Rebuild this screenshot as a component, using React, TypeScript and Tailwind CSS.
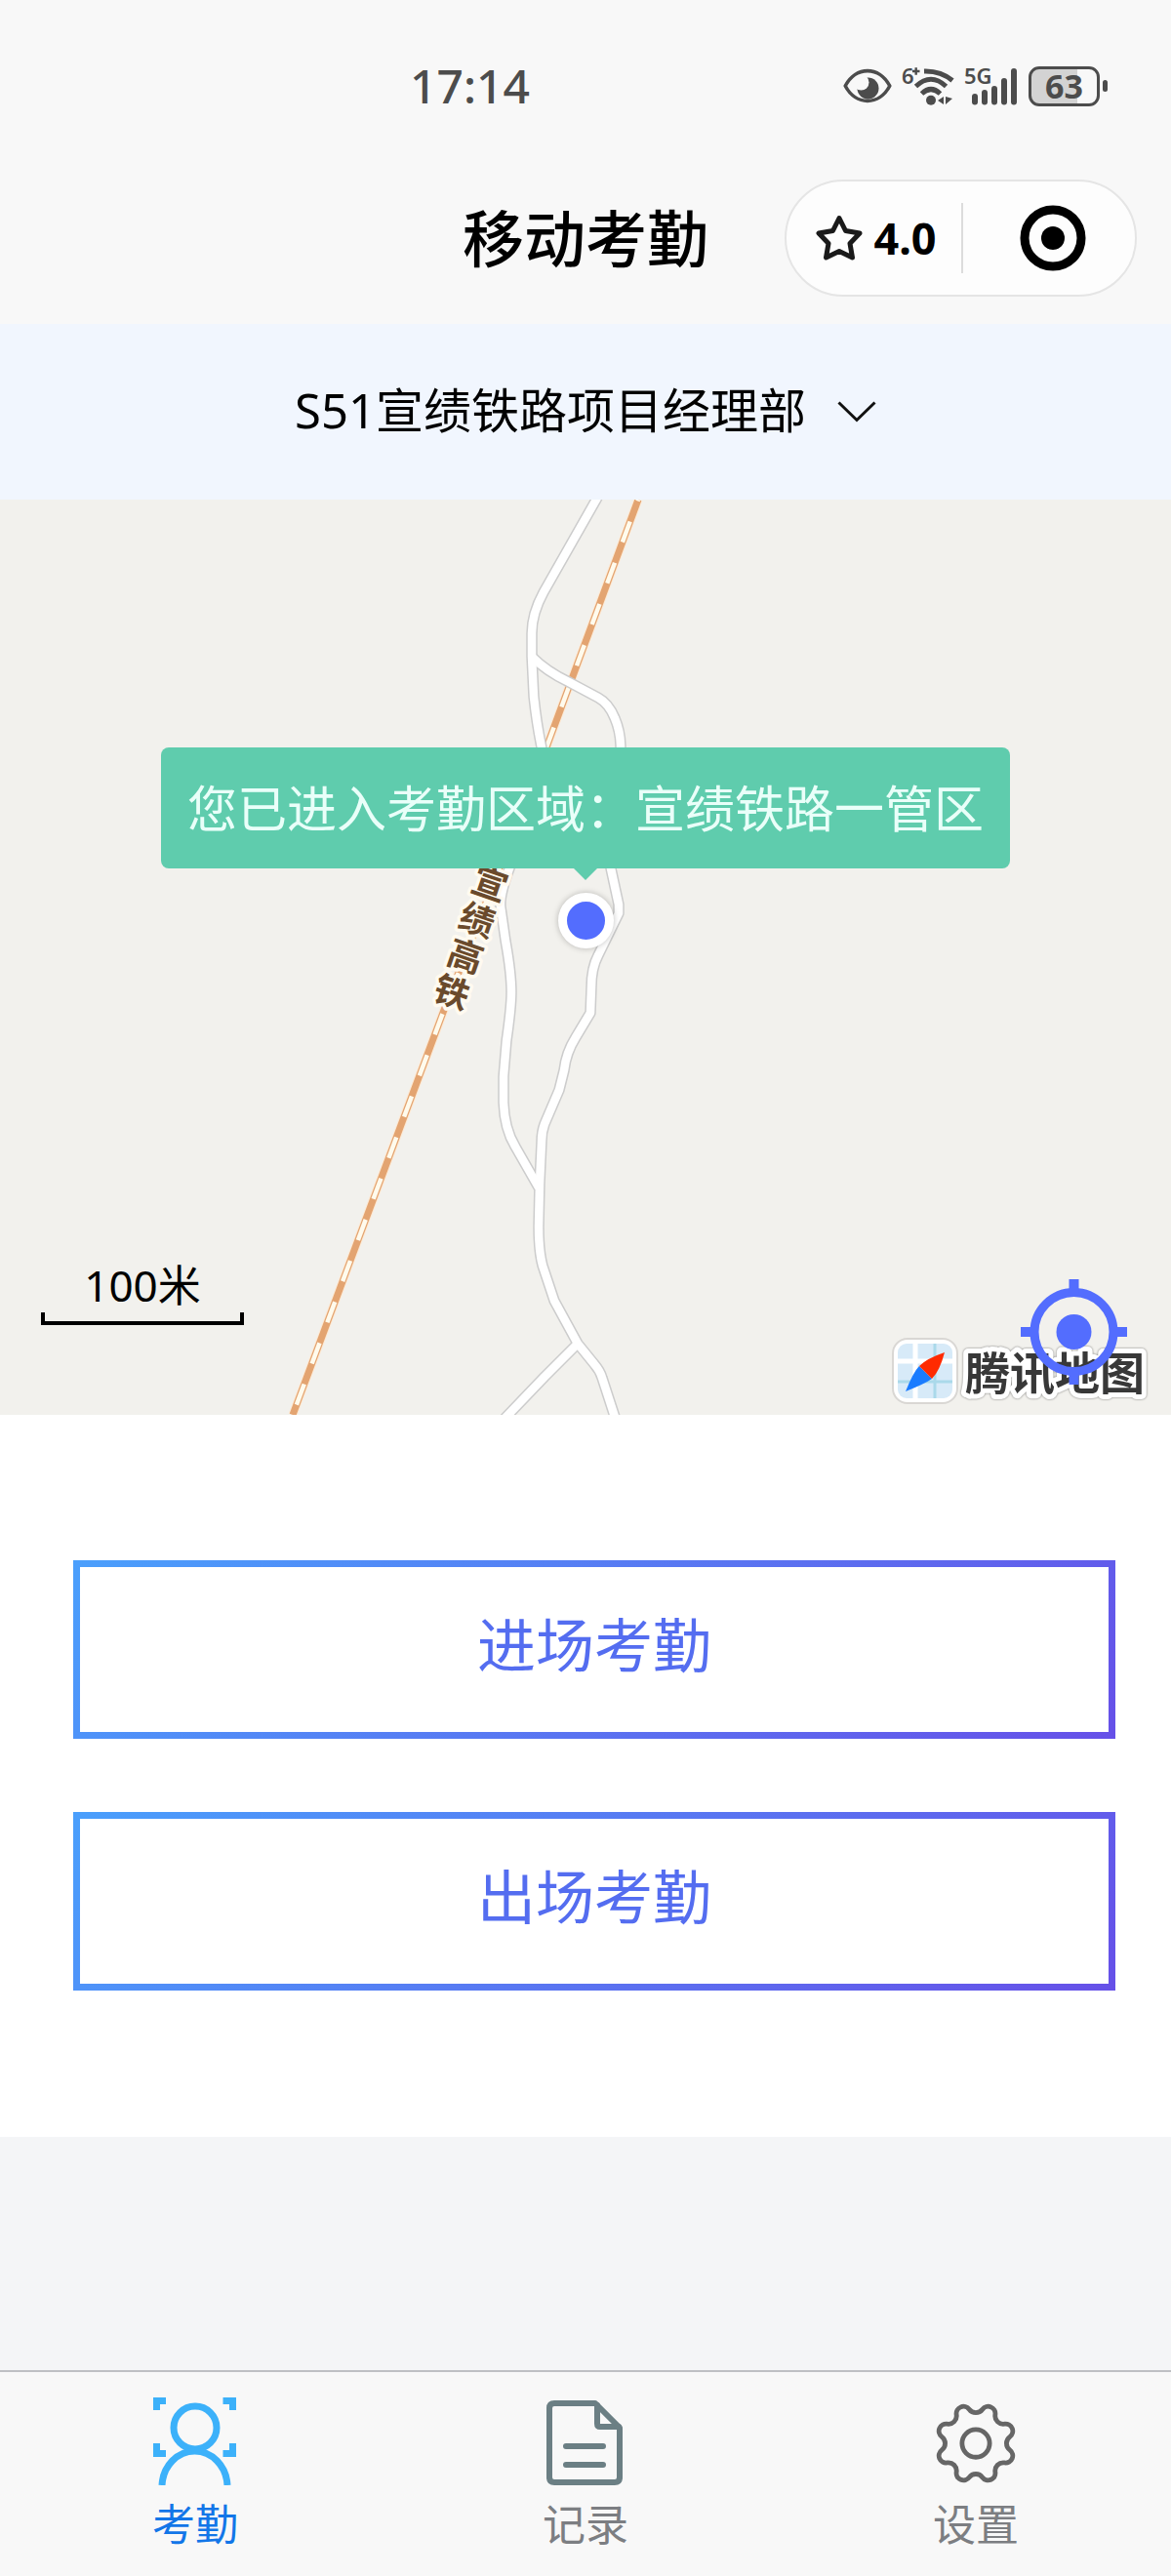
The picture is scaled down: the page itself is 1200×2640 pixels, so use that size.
import { useState } from "react";

const PROJECTS = ["S51宣绩铁路项目经理部"];

const TABS = [
  { id: "attendance", label: "考勤", icon: FaceIcon },
  { id: "records", label: "记录", icon: RecordIcon },
  { id: "settings", label: "设置", icon: GearIcon },
];

const MINOR_ROADS = [
  "M615 -8 L611 0 L557 95 Q545 117 545 137 L545 161 L547 202 Q550 230 555 254 L551 300 L522 378 Q512 405 513 417 L518 452 Q524 485 524 505 Q524 520 519 555 L516 591 V618 Q517 645 528 663 L552 705",
  "M545 161 Q560 176 583 187 L613 203 Q624 209 630 224 Q636 238 636 254 L626 360 V378 L634 415 V424 L613 467 Q606 480 606 500 L605 526 L590 551 Q580 567 578 585 L573 605 L558 640 Q555 648 555 658 L553 701 L552 745 Q552 770 556 785 L568 821 L592 865 L609 886 Q615 893 617 900 L632 946",
  "M592 865 L558 899 L514 945",
];

const RAILWAY = "M654 0 L560 254 L455 523 L300 938";

const RAIL_LABEL = [
  { char: "宣", x: 502, y: 394 },
  { char: "绩", x: 489, y: 431 },
  { char: "高", x: 477, y: 468 },
  { char: "铁", x: 463, y: 505 },
];

export default function App() {
  const [tab, setTab] = useState("attendance");

  return (
    <div className="flex min-h-screen flex-col bg-[#f4f5f7] font-['Noto_Sans','Noto_Sans_CJK_SC',sans-serif] text-black">
      <header className="bg-[#f8f8f8]">
        <StatusBar />
        <NavBar />
      </header>

      <label className="flex h-[180px] items-center justify-center gap-8 bg-[#f1f6fe]">
        <select
          aria-label="项目"
          className="mb-1 appearance-none bg-transparent text-[49px] leading-[72px] outline-none"
        >
          {PROJECTS.map((name) => (
            <option key={name}>{name}</option>
          ))}
        </select>
        <svg viewBox="0 0 40 22" className="h-[22px] w-10" fill="none" stroke="#111" strokeWidth="3">
          <path d="M1.5 1.5 L20 19.5 L38.5 1.5" />
        </svg>
      </label>

      <MapView />

      <main className="flex flex-col gap-[75px] bg-white pt-[149px] pr-[57px] pb-[150px] pl-[75px]">
        <PunchButton label="进场考勤" />
        <PunchButton label="出场考勤" />
      </main>

      <nav className="mt-auto grid grid-cols-3 border-t-2 border-[#bfc0c4] bg-[#f8f8f8]">
        {TABS.map(({ id, label, icon: Icon }) => (
          <button
            key={id}
            onClick={() => setTab(id)}
            className={`flex flex-col items-center gap-2 pt-[26px] pb-[21px] text-[44px] leading-[64px] ${
              tab === id ? "text-[#1276e8]" : "text-[#7c7e82]"
            }`}
          >
            <Icon />
            {label}
          </button>
        ))}
      </nav>
    </div>
  );
}

function StatusBar() {
  return (
    <div className="flex h-[176px] items-center pr-[65px] pl-[35%] text-[#4c4c4c]">
      <span className="text-[48px] leading-[60px] font-medium">17:14</span>
      <div className="ml-auto flex items-center gap-[10px]">
        <svg viewBox="0 0 50 36" className="h-9 w-[50px]">
          <circle cx="25.5" cy="20.5" r="11" fill="currentColor" />
          <circle cx="18.5" cy="14.5" r="8" fill="#f8f8f8" />
          <path
            d="M2.2 18 C13 -2.5 37 -2.5 47.8 18 C37 38.5 13 38.5 2.2 18 Z"
            fill="none"
            stroke="currentColor"
            strokeWidth="3.6"
            strokeLinejoin="round"
          />
        </svg>

        <svg viewBox="0 0 54 40" className="h-10 w-[54px] overflow-visible">
          <text x="0" y="18" fontSize="22" fontWeight="600" fill="currentColor">
            6
          </text>
          <path d="M11 5 H18.5 M14.7 1.2 V8.8" stroke="currentColor" strokeWidth="2.4" />
          <g fill="none" stroke="currentColor" strokeWidth="5">
            <path d="M23 5 Q40 4.5 52 14.5" />
            <path d="M14.5 20.5 Q30 6 45.5 20.5" />
            <path d="M20.5 28 Q30 19 39.5 28" />
          </g>
          <circle cx="30" cy="34.7" r="5" fill="currentColor" />
          <path d="M37 35 L43 31 V39 Z M45 31 V39 L52 33 Z" fill="currentColor" />
        </svg>

        <svg viewBox="0 0 56 40" className="h-10 w-14 overflow-visible">
          <text x="0" y="18" fontSize="22" fontWeight="600" fill="currentColor">
            5G
          </text>
          <path
            d="M11 31 V36.5 M21 27 V36.5 M31 23 V36.5 M41 15 V36.5 M51 5 V36.5"
            stroke="currentColor"
            strokeWidth="6"
            strokeLinecap="round"
          />
        </svg>

        <div className="flex items-center gap-[3px]">
          <span className="grid h-[41px] w-[73px] place-items-center rounded-[11px] border-[3px] border-current bg-linear-to-r from-[#d3d3d3] from-70% to-[#f8f8f8] to-70% text-[34px] leading-[34px] font-bold">
            63
          </span>
          <span className="h-3 w-[5px] rounded-full bg-current" />
        </div>
      </div>
    </div>
  );
}

function NavBar() {
  return (
    <div className="grid h-[156px] grid-cols-[1fr_auto_1fr] items-start px-[35px] pt-2">
      <h1 className="col-start-2 text-[63px] leading-[120px] font-medium">移动考勤</h1>
      <div className="flex h-[120px] w-[361px] items-center justify-self-end rounded-full border-2 border-[#e5e5e5] bg-[#fdfdfd]">
        <button className="flex w-[179px] items-center justify-center gap-[10px] pl-1 text-[45px] leading-[60px] font-bold">
          <svg viewBox="0 0 50 48" className="h-12 w-[50px]" fill="none" stroke="#1a1a1a" strokeWidth="5" strokeLinejoin="round">
            <path d="M25 3.5 L31.5 16.5 L46 19 L36 29.5 L38.5 44 L25 37.5 L11.5 44 L14 29.5 L4 19 L18.5 16.5 Z" />
          </svg>
          4.0
        </button>
        <span className="h-[72px] w-[2px] bg-[#dcdcdc]" />
        <button aria-label="关闭" className="flex flex-1 items-center justify-center pl-2">
          <svg viewBox="0 0 68 68" className="size-[68px]">
            <circle cx="34" cy="34" r="29" fill="none" stroke="#000" strokeWidth="9" />
            <circle cx="34" cy="34" r="12" />
          </svg>
        </button>
      </div>
    </div>
  );
}

function MapView() {
  return (
    <section className="relative aspect-[600/469] w-full overflow-hidden bg-[#f2f1ed]">
      <svg viewBox="0 0 1200 938" className="block h-full w-full" fill="none">
        <path d={RAILWAY} stroke="#fde9d3" strokeWidth="9" />
        <path d={RAILWAY} stroke="#e3a471" strokeWidth="7" />
        <path d={RAILWAY} stroke="#fffbed" strokeWidth="4.5" strokeDasharray="22.5 22.5" strokeDashoffset="21" />
        {MINOR_ROADS.map((d) => (
          <path key={d} d={d} stroke="#cccccc" strokeWidth="11.5" strokeLinejoin="round" />
        ))}
        {MINOR_ROADS.map((d) => (
          <path key={d} d={d} stroke="#fff" strokeWidth="8.5" strokeLinejoin="round" />
        ))}
        {RAIL_LABEL.map(({ char, x, y }) => (
          <text
            key={char}
            transform={`translate(${x} ${y}) rotate(19)`}
            y="13"
            textAnchor="middle"
            fontSize="36"
            fontWeight="700"
            fill="#6a4a2c"
            stroke="#fffaf0"
            strokeWidth="7"
            strokeLinejoin="round"
            paintOrder="stroke"
          >
            {char}
          </text>
        ))}
      </svg>

      {/* current position with its callout */}
      <div className="absolute inset-x-0 bottom-[51%] flex flex-col items-center">
        <div className="rounded-lg bg-[#5fccad] px-[27px] py-[26px] text-[51px] leading-[72px] whitespace-nowrap text-[#e9fff9]">
          您已进入考勤区域：宣绩铁路一管区
        </div>
        <svg viewBox="0 0 24 12" className="h-3 w-6">
          <path d="M0 0 H24 L12 12 Z" fill="#5fccad" />
        </svg>
        <span className="mt-[13px] size-[57px] rounded-full border-[9px] border-white bg-[#536dfe] shadow-[0_0_6px_rgba(0,0,0,0.25)]" />
      </div>

      <div className="absolute bottom-[92px] left-[42px] w-[208px] text-center text-[44px] leading-[56px]">
        100米
        <div className="h-[13px] border-4 border-t-0 border-black" />
      </div>

      <a href="#" className="absolute right-6 bottom-[11px] flex items-center gap-[2px]">
        <TencentMapLogo />
        <svg viewBox="0 0 192 64" className="h-16 w-48 overflow-visible drop-shadow-[0_0_1px_rgba(0,0,0,0.5)]">
          <text
            x="5"
            y="51"
            fontSize="46"
            fontWeight="700"
            fill="#383838"
            stroke="#fff"
            strokeWidth="10"
            strokeLinejoin="round"
            paintOrder="stroke"
          >
            腾讯地图
          </text>
        </svg>
      </a>

      <button aria-label="定位" className="absolute right-[45px] bottom-[31px]">
        <svg viewBox="0 0 109 108" className="h-[108px] w-[109px]" fill="none" stroke="#536dfe">
          <circle cx="54.5" cy="54" r="40.5" strokeWidth="9" />
          <path d="M54.5 0 V14 M54.5 94 V108 M0 54 H14 M95 54 H109" strokeWidth="10" />
          <circle cx="54.5" cy="54" r="18" fill="#536dfe" stroke="none" />
        </svg>
      </button>
    </section>
  );
}

function PunchButton({ label }: { label: string }) {
  return (
    <button className="bg-[linear-gradient(135deg,#4a9ffc,#6650e8)] p-[7px]">
      <span className="block bg-white pt-8 pb-[41px] text-[60px] leading-[96px] text-[#546df0]">{label}</span>
    </button>
  );
}

function TencentMapLogo() {
  return (
    <svg viewBox="0 0 68 68" className="size-[68px]">
      <rect x="1" y="1" width="66" height="66" rx="15" fill="#fff" stroke="#d9d7d4" strokeWidth="2" />
      <rect x="6" y="6" width="56" height="56" rx="9" fill="#d7eaf8" />
      <path d="M24 6 V62 M6 24 H62" stroke="#fff" strokeWidth="5" />
      <path d="M44 6 V62 M6 45 H62" stroke="#aad9ea" strokeWidth="3" />
      <path d="M28 29 Q22 35 14 55 Q34 47 41 42 Z" fill="#1a7cff" />
      <path d="M54 15 Q49 34 41 42 L28 29 Q36 21 54 15 Z" fill="#ff2a00" />
    </svg>
  );
}

function FaceIcon() {
  return (
    <svg viewBox="0 0 90 90" className="size-[90px]" fill="none" stroke="#3cb1fa">
      <circle cx="45" cy="31" r="22" strokeWidth="7" />
      <path d="M11 90 C12 70 27 55 44.5 55 C62 55 77 70 78 90" strokeWidth="7" />
      <path d="M5.5 13 V3.5 H15 M73.5 3.5 H83.5 V13 M83.5 47 V57.5 H73.5 M15 57.5 H5.5 V47" strokeWidth="7" />
    </svg>
  );
}

function RecordIcon() {
  return (
    <svg
      viewBox="0 0 90 90"
      className="size-[90px]"
      fill="none"
      stroke="#6b7f84"
      strokeWidth="6"
      strokeLinejoin="round"
      strokeLinecap="round"
    >
      <path d="M55 6 H13 Q8 6 8 11 V82 Q8 87 13 87 H75 Q80 87 80 82 V31 Z" />
      <path d="M57 8 V27 Q57 30 60 30 H79" />
      <path d="M25 50 H63 M25 69 H63" />
    </svg>
  );
}

function GearIcon() {
  return (
    <svg viewBox="-43 -45 86 86" className="size-[90px]" fill="none" stroke="#666" strokeWidth="4.6">
      <path d={gearPath(8)} />
      <circle r="13.5" />
    </svg>
  );
}

// Alternates outward arcs (teeth) with inward arcs (gaps) that touch each other.
function gearPath(teeth: number) {
  const at = (radius: number, angle: number) => [radius * Math.cos(angle), radius * Math.sin(angle)];
  const half = Math.PI / teeth;
  const joint = (tooth: number, gap: number) => {
    const [tx, ty] = at(31.6, tooth);
    const [gx, gy] = at(38, gap);
    return `${(tx * 8 + gx * 7) / 15} ${(ty * 8 + gy * 7) / 15}`;
  };

  let d = "";
  for (let i = 0; i < teeth; i++) {
    const a = half + i * half * 2;
    d += `${i ? "L" : "M"}${joint(a, a - half)} A7 7 0 0 1 ${joint(a, a + half)} `;
    d += `A8 8 0 0 0 ${joint(a + half * 2, a + half)} `;
  }
  return d + "Z";
}
